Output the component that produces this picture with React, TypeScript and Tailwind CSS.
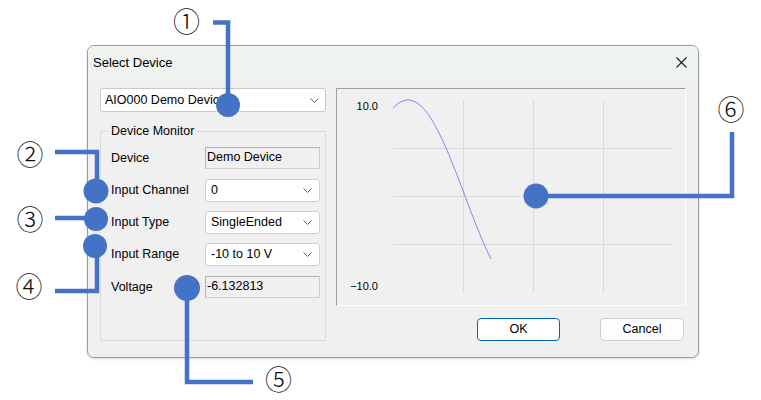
import React from "react";

const blue = "#4472C4";

const Chevron = () => (
  <svg width="9" height="5" viewBox="0 0 9 5" className="shrink-0">
    <polyline points="0.5,0.5 4.5,4.5 8.5,0.5" fill="none" stroke="#5f5f5f" strokeWidth="1" />
  </svg>
);

const Combo = ({ value }: { value: string }) => (
  <div className="flex h-[23px] w-[115px] items-center justify-between rounded-[3px] border border-[#cdcdcd] bg-white pl-[5px] pr-[7px]">
    <span>{value}</span>
    <Chevron />
  </div>
);

const ReadOnly = ({ value }: { value: string }) => (
  <div className="h-[22px] w-[115px] border border-[#cfcfcf] border-l-[#b3b3b3] border-t-[#b3b3b3] bg-[#f0f0f0] pl-[1px] leading-[18px]">
    {value}
  </div>
);

const Row = ({ label, children }: { label: string; children: React.ReactNode }) => (
  <div className="flex items-center pl-[10px]">
    <span className="w-[94px]">{label}</span>
    {children}
  </div>
);

// sine trace in chart-local coords
const tracePoints = () => {
  const pts: string[] = [];
  for (let x = 56; x <= 154; x += 2) {
    const y = 107 - 96 * Math.cos(((x - 71) / 57) * (Math.PI / 2));
    pts.push(`${x},${y.toFixed(1)}`);
  }
  return pts.join(" ");
};

const Chart = () => (
  <div className="h-[218px] w-[350px] border-l border-t border-b-white border-r-white border-[#a0a0a0] border-b border-r bg-[#f0f0f0]">
    <svg width="348" height="216" className="block">
      {[126, 196, 266].map((x) => (
        <line key={x} x1={x + 0.5} y1={11} x2={x + 0.5} y2={204} stroke="#dadada" />
      ))}
      {[59, 107, 155].map((y) => (
        <line key={y} x1={56} y1={y + 0.5} x2={335} y2={y + 0.5} stroke="#dadada" />
      ))}
      <polyline points={tracePoints()} fill="none" stroke="#9b7ce6" strokeWidth="1" />
      <text x="41" y="21" textAnchor="end" fontSize="11" fill="#000">10.0</text>
      <text x="41" y="201" textAnchor="end" fontSize="11" fill="#000">−10.0</text>
    </svg>
  </div>
);

const Annotations = () => {
  const digits: [string, number, number][] = [
    ["①", 186.5, 20.5],
    ["②", 30, 153],
    ["③", 30, 218],
    ["④", 29, 285],
    ["⑤", 278.5, 378.5],
    ["⑥", 731, 108.5],
  ];
  return (
    <svg width="761" height="400" className="pointer-events-none absolute left-0 top-0">
      <g fill="none" stroke={blue} strokeWidth="4.5">
        <path d="M213 22.5 H228 V105" />
        <path d="M55 152 H97 V191" />
        <path d="M55 218 H96" />
        <path d="M97 246 V291 H55" />
        <path d="M187 288 V382 H253" />
        <path d="M732 132 V196 H536" />
      </g>
      <g fill={blue}>
        <circle cx="228" cy="105" r="12" />
        <circle cx="96" cy="191" r="12.5" />
        <circle cx="96" cy="219" r="12" />
        <circle cx="95" cy="246" r="12" />
        <circle cx="187" cy="288" r="13" />
        <circle cx="536" cy="196" r="12.5" />
      </g>
      {digits.map(([d, x, y]) => (
        <text
          key={d}
          x={x}
          y={y}
          textAnchor="middle"
          dominantBaseline="central"
          fontSize="27"
          fontWeight="300"
          fill="#111"
          fontFamily='"Noto Sans CJK JP", sans-serif'
        >
          {d}
        </text>
      ))}
    </svg>
  );
};

export default function App() {
  return (
    <div
      className="relative h-[400px] w-[761px] overflow-hidden bg-white pl-[87px] pt-[45px] text-[12.5px] text-black"
      style={{ fontFamily: '"Liberation Sans", Arial, sans-serif' }}
    >
      <div className="flex h-[313px] w-[612px] flex-col overflow-hidden rounded-[7px] border border-[#9c9c9c] bg-[#f0f0f0] shadow-[0_1px_3px_rgba(0,0,0,0.15)]">
        <div className="flex h-[33px] items-center justify-between bg-[#eef3ef] pl-[5px] pr-[11px]">
          <span className="text-[13px]">Select Device</span>
          <svg width="11" height="11" viewBox="0 0 11 11">
            <path d="M0.5 0.5 L10.5 10.5 M10.5 0.5 L0.5 10.5" stroke="#1c1c1c" strokeWidth="1.1" />
          </svg>
        </div>
        <div className="flex gap-[10px] pl-[12px] pt-[9px]">
          <div className="flex w-[226px] flex-col">
            <div className="flex h-[24px] items-center justify-between rounded-[3px] border border-[#c9c9c9] bg-white pl-[4px] pr-[6px]">
              <span>AIO000 Demo Device</span>
              <Chevron />
            </div>
            <fieldset className="mt-[11px] h-[218px] border border-[#dcdcdc] pt-[8px]">
              <legend className="ml-[8px] px-[2px] leading-[16px]">Device Monitor</legend>
              <div className="flex flex-col gap-[9px]">
                <div className="mb-[1px]">
                  <Row label="Device">
                    <ReadOnly value="Demo Device" />
                  </Row>
                </div>
                <Row label="Input Channel">
                  <Combo value="0" />
                </Row>
                <Row label="Input Type">
                  <Combo value="SingleEnded" />
                </Row>
                <Row label="Input Range">
                  <Combo value="-10 to 10 V" />
                </Row>
                <div className="mt-[1px]">
                  <Row label="Voltage">
                    <ReadOnly value="-6.132813" />
                  </Row>
                </div>
              </div>
            </fieldset>
          </div>
          <div className="flex w-[350px] flex-col">
            <Chart />
            <div className="mt-[12px] flex justify-end gap-[40px] pr-[2px]">
              <button className="flex h-[23px] w-[83px] items-center justify-center rounded-[4px] border border-[#0067c0] bg-white">
                OK
              </button>
              <button className="flex h-[23px] w-[84px] items-center justify-center rounded-[4px] border border-[#d0d0d0] bg-[#fdfdfd]">
                Cancel
              </button>
            </div>
          </div>
        </div>
      </div>
      <Annotations />
    </div>
  );
}
